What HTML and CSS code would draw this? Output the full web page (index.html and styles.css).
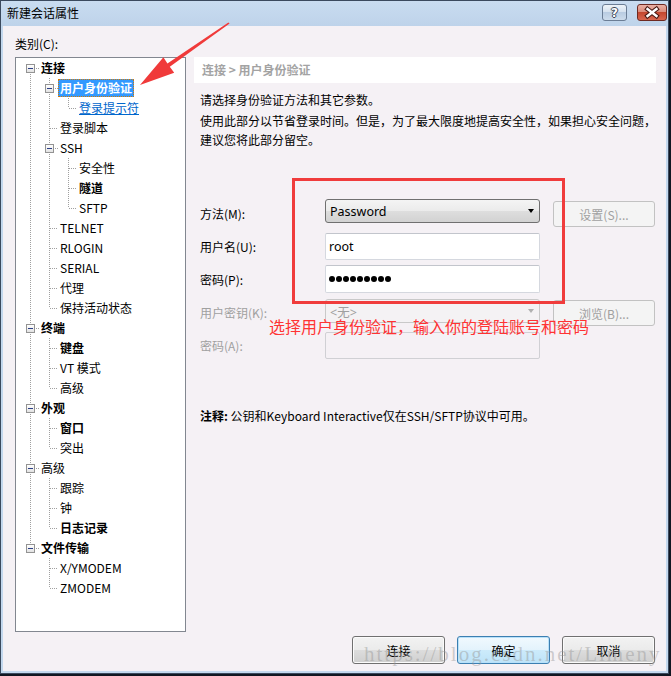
FILE: index.html
```html
<!DOCTYPE html>
<html lang="zh-CN">
<head>
<meta charset="utf-8">
<title>新建会话属性</title>
<link rel="stylesheet" href="styles.css">
</head>
<body>
<div class="window">
  <div class="titlebar">
    <span class="title">新建会话属性</span>
    <div class="tb-btns">
      <span class="tb-help">?</span>
      <span class="tb-close"><svg width="30" height="17" viewBox="0 0 30 17"><path d="M10.5 5 L19.5 12 M19.5 5 L10.5 12" stroke="#4a1a14" stroke-width="4.6" stroke-linecap="square" fill="none"/><path d="M10.5 5 L19.5 12 M19.5 5 L10.5 12" stroke="#fff" stroke-width="2.4" stroke-linecap="square" fill="none"/></svg></span>
    </div>
  </div>
  <div class="client">
    <div class="cat-label">类别(C):</div>
    <div class="main">
      <div class="tree">
        <ul class="tree-list">
          <li class="node first">
            <div class="row"><span class="slot"><span class="tw"></span><span class="dl"></span></span><span class="lbl b">连接</span></div>
            <ul class="tree-list">
              <li class="node">
                <div class="row"><span class="slot"><span class="tw"></span><span class="dl"></span></span><span class="lbl sel">用户身份验证</span></div>
                <ul class="tree-list">
                  <li class="node last"><div class="row"><span class="slot"><span class="dl leaf"></span></span><span class="lbl link">登录提示符</span></div></li>
                </ul>
              </li>
              <li class="node"><div class="row"><span class="slot"><span class="dl leaf"></span></span><span class="lbl">登录脚本</span></div></li>
              <li class="node">
                <div class="row"><span class="slot"><span class="tw"></span><span class="dl"></span></span><span class="lbl">SSH</span></div>
                <ul class="tree-list">
                  <li class="node"><div class="row"><span class="slot"><span class="dl leaf"></span></span><span class="lbl">安全性</span></div></li>
                  <li class="node"><div class="row"><span class="slot"><span class="dl leaf"></span></span><span class="lbl b">隧道</span></div></li>
                  <li class="node last"><div class="row"><span class="slot"><span class="dl leaf"></span></span><span class="lbl">SFTP</span></div></li>
                </ul>
              </li>
              <li class="node"><div class="row"><span class="slot"><span class="dl leaf"></span></span><span class="lbl">TELNET</span></div></li>
              <li class="node"><div class="row"><span class="slot"><span class="dl leaf"></span></span><span class="lbl">RLOGIN</span></div></li>
              <li class="node"><div class="row"><span class="slot"><span class="dl leaf"></span></span><span class="lbl">SERIAL</span></div></li>
              <li class="node"><div class="row"><span class="slot"><span class="dl leaf"></span></span><span class="lbl">代理</span></div></li>
              <li class="node last"><div class="row"><span class="slot"><span class="dl leaf"></span></span><span class="lbl">保持活动状态</span></div></li>
            </ul>
          </li>
          <li class="node">
            <div class="row"><span class="slot"><span class="tw"></span><span class="dl"></span></span><span class="lbl b">终端</span></div>
            <ul class="tree-list">
              <li class="node"><div class="row"><span class="slot"><span class="dl leaf"></span></span><span class="lbl b">键盘</span></div></li>
              <li class="node"><div class="row"><span class="slot"><span class="dl leaf"></span></span><span class="lbl">VT 模式</span></div></li>
              <li class="node last"><div class="row"><span class="slot"><span class="dl leaf"></span></span><span class="lbl">高级</span></div></li>
            </ul>
          </li>
          <li class="node">
            <div class="row"><span class="slot"><span class="tw"></span><span class="dl"></span></span><span class="lbl b">外观</span></div>
            <ul class="tree-list">
              <li class="node"><div class="row"><span class="slot"><span class="dl leaf"></span></span><span class="lbl b">窗口</span></div></li>
              <li class="node last"><div class="row"><span class="slot"><span class="dl leaf"></span></span><span class="lbl">突出</span></div></li>
            </ul>
          </li>
          <li class="node">
            <div class="row"><span class="slot"><span class="tw"></span><span class="dl"></span></span><span class="lbl">高级</span></div>
            <ul class="tree-list">
              <li class="node"><div class="row"><span class="slot"><span class="dl leaf"></span></span><span class="lbl">跟踪</span></div></li>
              <li class="node"><div class="row"><span class="slot"><span class="dl leaf"></span></span><span class="lbl">钟</span></div></li>
              <li class="node last"><div class="row"><span class="slot"><span class="dl leaf"></span></span><span class="lbl b">日志记录</span></div></li>
            </ul>
          </li>
          <li class="node last">
            <div class="row"><span class="slot"><span class="tw"></span><span class="dl"></span></span><span class="lbl b">文件传输</span></div>
            <ul class="tree-list">
              <li class="node"><div class="row"><span class="slot"><span class="dl leaf"></span></span><span class="lbl">X/YMODEM</span></div></li>
              <li class="node last"><div class="row"><span class="slot"><span class="dl leaf"></span></span><span class="lbl">ZMODEM</span></div></li>
            </ul>
          </li>
        </ul>
      </div>
      <div class="panel">
        <div class="crumb">连接 &gt; 用户身份验证</div>
        <div class="desc">
          <p class="p1">请选择身份验证方法和其它参数。</p>
          <p class="p2">使用此部分以节省登录时间。但是，为了最大限度地提高安全性，如果担心安全问题，<br>建议您将此部分留空。</p>
        </div>
        <div class="form">
          <span class="flabel">方法(M):</span>
          <div class="combo c-top"><span>Password</span><span class="caret"></span></div>
          <span class="btn-sm dis b-low">设置(S)...</span>

          <span class="flabel">用户名(U):</span>
          <div class="tb">root</div>
          <span></span>

          <span class="flabel">密码(P):</span>
          <div class="tb"><span class="dot"></span><span class="dot"></span><span class="dot"></span><span class="dot"></span><span class="dot"></span><span class="dot"></span><span class="dot"></span><span class="dot"></span><span class="dot"></span></div>
          <span></span>

          <span class="flabel dis-t">用户密钥(K):</span>
          <div class="combo dis c-top2"><span>&lt;无&gt;</span><span class="caret"></span></div>
          <span class="btn-sm dis b-low">浏览(B)...</span>

          <span class="flabel dis-t">密码(A):</span>
          <div class="tb dis"></div>
          <span></span>
        </div>
        <p class="note"><b>注释:</b> 公钥和Keyboard Interactive仅在SSH/SFTP协议中可用。</p>
      </div>
    </div>
    <div class="footer">
      <span class="btn">连接</span>
      <span class="btn focus">确定</span>
      <span class="btn">取消</span>
    </div>
  </div>

  <div class="red-box"></div>
  <div class="red-text">选择用户身份验证，输入你的登陆账号和密码</div>
  <div class="watermark">https://blog.csdn.net/Limeny</div>
  <svg class="arrow" width="669" height="674" viewBox="0 0 669 674">
    <polygon points="229.6,23.6 169.8,66.8 174.2,72.8 140,85 163.4,57.2 167.4,63.6 228.4,22.4" fill="#f03a3a"/>
  </svg>
</div>
</body>
</html>
```

FILE: styles.css
```css
html, body {
  margin: 0;
  padding: 0;
  height: 100%;
}
body {
  background: #111722;
  font-family: "Noto Sans CJK SC", "Noto Sans", sans-serif;
  font-size: 12px;
  color: #000;
}
.window {
  position: relative;
  width: 669px;
  height: 674px;
  box-sizing: border-box;
  border: 1px solid #3b4a5e;
  background: #c3d8ee;
  display: flex;
  flex-direction: column;
}
.titlebar {
  height: 25px;
  flex: none;
  display: flex;
  align-items: flex-start;
  padding-left: 6px;
  background: linear-gradient(#c9dcf0, #bed3ea);
}
.title {
  flex: 1;
  line-height: 16px;
  margin-top: 4px;
}
.tb-btns {
  display: flex;
  gap: 10px;
  margin-top: 3px;
  margin-right: 1px;
}
.tb-help, .tb-close {
  height: 17px;
  box-sizing: border-box;
  border-radius: 3px;
  display: flex;
  align-items: center;
  justify-content: center;
  overflow: hidden;
}
.tb-help {
  width: 25px;
  border: 1px solid #6b7d95;
  background: linear-gradient(#eef3f9, #d3e0ee 50%, #b9cce2 50%, #cddcec);
  color: #fff;
  font-family: "DejaVu Sans", sans-serif;
  font-weight: bold;
  font-size: 12px;
  text-shadow: 1px 0 0 #3a4656, -1px 0 0 #3a4656, 0 1px 0 #3a4656, 0 -1px 0 #3a4656;
}
.tb-close {
  width: 30px;
  border: 1px solid #6e2a22;
  background: linear-gradient(#eab0a4, #d98877 50%, #c4472f 50%, #d8664f);
}
.tb-close svg {
  display: block;
  flex: none;
}
.client {
  flex: 1;
  margin: 0 2px 2px 2px;
  background: #f5f1f5;
  padding: 9px 10px 0 12px;
  display: flex;
  flex-direction: column;
}
.cat-label {
  line-height: 18px;
  margin-bottom: 4px;
}
.main {
  display: flex;
  gap: 8px;
  height: 575px;
}
.tree {
  width: 171px;
  flex: none;
  box-sizing: border-box;
  border: 1px solid #828790;
  background: #fff;
}
.tree-list {
  list-style: none;
  margin: 0;
  padding: 0;
}
.tree-list .tree-list {
  padding-left: 19px;
}
.node {
  background-image: repeating-linear-gradient(to bottom, #a0a0a0 0 1px, transparent 1px 2px);
  background-repeat: no-repeat;
  background-size: 1px 100%;
  background-position: 14px 0;
}
.node.first {
  background-position: 14px 10px;
  background-size: 1px calc(100% - 10px);
}
.node.last {
  background-size: 1px 10px;
}
.row {
  height: 20px;
  display: flex;
  align-items: center;
}
.slot {
  width: 23px;
  flex: none;
  display: flex;
  align-items: center;
}
.tw {
  width: 9px;
  height: 9px;
  box-sizing: border-box;
  margin-left: 10px;
  border: 1px solid #939393;
  background: linear-gradient(#ffffff, #e2e2e2);
  display: flex;
  align-items: center;
  justify-content: center;
  flex: none;
}
.tw::after {
  content: "";
  width: 5px;
  height: 1px;
  background: #2c3f86;
}
.dl {
  flex: 1;
  height: 1px;
  margin-left: 1px;
  background: repeating-linear-gradient(to right, #a0a0a0 0 1px, transparent 1px 2px);
}
.dl.leaf {
  margin-left: 15px;
}
.lbl {
  padding: 0 2px;
  line-height: 16px;
  white-space: nowrap;
}
.b {
  font-weight: bold;
}
.sel {
  padding: 0 1px;
  border: 1px dotted #d87a00;
  background: #3399ff;
  color: #fff;
  font-weight: bold;
}
.link {
  color: #0066cc;
  text-decoration: underline;
}
.panel {
  flex: 1;
  display: flex;
  flex-direction: column;
}
.crumb {
  height: 26px;
  line-height: 26px;
  background: #fff;
  padding-left: 8px;
  font-weight: bold;
  color: #a3a3a3;
}
.desc {
  padding-left: 6px;
  margin-top: 7px;
}
.p1 {
  margin: 0;
  line-height: 20px;
}
.p2 {
  margin: 1px 0 0;
  line-height: 19px;
  white-space: nowrap;
}
.form {
  display: grid;
  grid-template-columns: 112px 215px 102px;
  grid-template-rows: 29px 27px 28px 29px 27px;
  column-gap: 13px;
  row-gap: 5px;
  margin-top: 50px;
  padding-left: 6px;
  align-items: center;
}
.flabel {
  white-space: nowrap;
}
.dis-t {
  color: #a0a0a0;
}
.combo {
  height: 24px;
  box-sizing: border-box;
  border: 1px solid #707070;
  border-radius: 3px;
  background: linear-gradient(#f4f4f4, #ebebeb 50%, #dedede 50%, #d2d2d2);
  display: flex;
  align-items: center;
  justify-content: space-between;
  padding: 0 5px 0 4px;
  font-family: "Noto Sans", "Noto Sans CJK SC", sans-serif;
  font-size: 12.5px;
}
.c-top {
  align-self: start;
}
.c-top2 {
  align-self: start;
  margin-top: 1px;
}
.caret {
  width: 0;
  height: 0;
  border-left: 3px solid transparent;
  border-right: 3px solid transparent;
  border-top: 4px solid #000;
}
.combo.dis {
  border-color: #c9c9c9;
  background: #f4f2f4;
  color: #a0a0a0;
}
.combo.dis .caret {
  border-top-color: #b0b0b0;
}
.tb {
  height: 100%;
  box-sizing: border-box;
  border: 1px solid #d5d8df;
  border-top-color: #c2c5cc;
  border-radius: 2px;
  background: #fff;
  padding-left: 3px;
  display: flex;
  align-items: center;
  gap: 1px;
  font-family: "Noto Sans", "Noto Sans CJK SC", sans-serif;
  font-size: 12.5px;
}
.tb.dis {
  background: #f5f1f5;
  border-color: #d0d0d4;
}
.dot {
  width: 6px;
  height: 6px;
  border-radius: 50%;
  background: #000;
  flex: none;
}
.btn-sm {
  height: 26px;
  box-sizing: border-box;
  border-radius: 3px;
  display: flex;
  align-items: center;
  justify-content: center;
}
.b-low {
  align-self: end;
  margin-bottom: 1px;
}
.btn-sm.dis {
  border: 1px solid #c2c2c2;
  background: #f4f4f4;
  color: #a0a0a0;
}
.note {
  margin: 47px 0 0;
  padding-left: 6px;
  line-height: 20px;
}
.footer {
  display: flex;
  justify-content: flex-end;
  gap: 12px;
  margin-top: 4px;
  padding-right: 1px;
}
.btn {
  width: 93px;
  height: 28px;
  box-sizing: border-box;
  border: 1px solid #707070;
  border-radius: 3px;
  background: linear-gradient(#f2f2f2, #ebebeb 50%, #dddddd 50%, #cfcfcf);
  box-shadow: inset 0 0 0 1px #fbfbfb;
  display: flex;
  align-items: center;
  justify-content: center;
}
.btn.focus {
  border-color: #3c7fb1;
  background: linear-gradient(#f1f9fe, #e3f3fc 50%, #cdebfb 50%, #bde3f8);
  box-shadow: inset 0 0 0 1px #b8e1fa;
}
.red-box {
  position: absolute;
  left: 291px;
  top: 177px;
  width: 273px;
  height: 126px;
  box-sizing: border-box;
  border: 3px solid #f03c3c;
}
.red-text {
  position: absolute;
  left: 268px;
  top: 315px;
  font-size: 16px;
  line-height: 20px;
  color: #ff3333;
  white-space: nowrap;
}
.watermark {
  position: absolute;
  left: 363px;
  top: 640px;
  font-family: "Liberation Serif", serif;
  font-size: 21px;
  line-height: 26px;
  letter-spacing: 2px;
  color: rgba(150, 150, 150, 0.45);
  white-space: nowrap;
}
.arrow {
  position: absolute;
  left: -1px;
  top: -1px;
  pointer-events: none;
}
```
